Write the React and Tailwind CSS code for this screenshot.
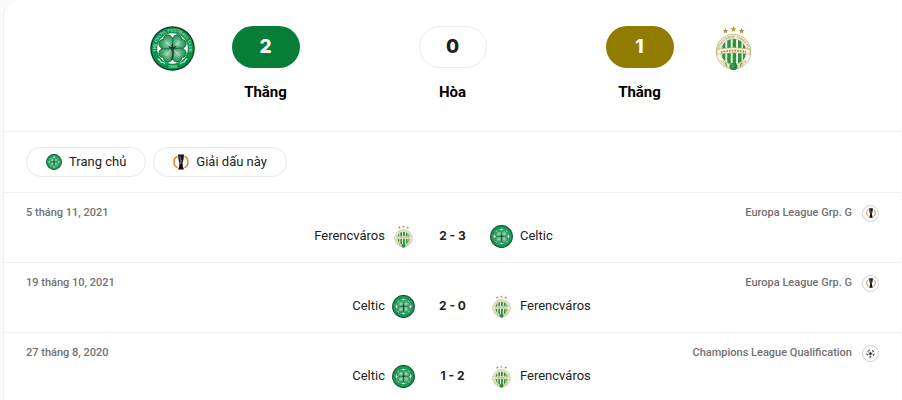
import { useId } from 'react'

const MATCHES = [
  { id: 1, date: '5 tháng 11, 2021', league: 'Europa League Grp. G', cup: 'europa', home: 'Ferencváros', away: 'Celtic', score: '2 - 3' },
  { id: 2, date: '19 tháng 10, 2021', league: 'Europa League Grp. G', cup: 'europa', home: 'Celtic', away: 'Ferencváros', score: '2 - 0' },
  { id: 3, date: '27 tháng 8, 2020', league: 'Champions League Qualification', cup: 'champions', home: 'Celtic', away: 'Ferencváros', score: '1 - 2' },
]

const LEAF = 'M50 50C47 44 33 40 33 29C33 18 45 15 50 22C55 15 67 18 67 29C67 40 53 44 50 50Z'

function CelticCrest({ className, lettering = false }) {
  const id = useId()
  return (
    <svg viewBox="0 0 100 100" className={className} aria-hidden="true">
      <defs>
        <radialGradient id={`${id}leaf`} cx="50%" cy="50%" r="60%">
          <stop offset="0" stopColor="#9fd8b4" />
          <stop offset="0.500" stopColor="#4fae77" />
          <stop offset="1" stopColor="#1d8a4e" />
        </radialGradient>
        <path id={`${id}top`} d="M14.500 60A37 37 0 1 1 85.500 60" />
      </defs>
      <circle cx="50" cy="50" r="49.500" fill="#0b3d24" />
      <circle cx="50" cy="50" r="46.500" fill="#0a9249" />
      <circle cx="50" cy="50" r="34" fill="#fff" />
      {lettering ? (
        <>
          <text fill="#a4dcba" fontSize="9" fontWeight="700" fontFamily="Liberation Sans, sans-serif">
            <textPath href={`#${id}top`} startOffset="50%" textAnchor="middle">THE CELTIC FOOTBALL CLUB</textPath>
          </text>
          <text x="50" y="93" textAnchor="middle" fill="#8fd0a9" fontSize="9" fontWeight="700" fontFamily="Liberation Sans, sans-serif">1888</text>
          <path d="M17 73q4 0 5 4t6 4q3 0 6 4M83 73q-4 0 -5 4t-6 4q-3 0 -6 4" fill="none" stroke="#c9ead6" strokeWidth="2.500" />
        </>
      ) : (
        <circle cx="50" cy="50" r="39.500" fill="none" stroke="#7fcb9f" strokeWidth="4" strokeDasharray="3 3" opacity="0.500" />
      )}
      {[45, 135, 225, 315].map((turn) => (
        <path key={turn} d={LEAF} transform={`rotate(${turn} 50 50)`} fill={`url(#${id}leaf)`} stroke="#0a6e39" strokeWidth="2" />
      ))}
      <path d="M34 34L66 66M66 34L34 66" stroke="#c4e4d0" strokeWidth="1.500" />
      <path d="M50 50q3 12 -2 26M42 46l8 4l8 -5M50 41v9" fill="none" stroke="#26332b" strokeWidth="3" />
      <circle cx="50" cy="50" r="4" fill="#26332b" />
    </svg>
  )
}

function FerencvarosCrest({ className, lettering = false }) {
  const id = useId()
  const star = 'M0 -6.500L1.800 -2L6.500 -2L2.800 1L4.200 5.600L0 2.900L-4.200 5.600L-2.800 1L-6.500 -2L-1.800 -2Z'
  return (
    <svg viewBox="0 0 100 100" className={className} aria-hidden="true">
      <defs>
        <clipPath id={`${id}disc`}>
          <circle cx="50" cy="57" r="28" />
        </clipPath>
        <path id={`${id}arc`} d="M18.500 64A32 32 0 1 1 81.500 64" />
      </defs>
      <g fill="#b5953c">
        <path d={star} transform="translate(32 11)" />
        <path d={star} transform="translate(50 7)" />
        <path d={star} transform="translate(68 11)" />
      </g>
      <circle cx="50" cy="57" r="38.500" fill="#fbf9ef" stroke="#c2b57b" strokeWidth="2" />
      {lettering ? (
        <text fill="#a3924c" fontSize="7" fontWeight="700" fontFamily="Liberation Sans, sans-serif">
          <textPath href={`#${id}arc`} startOffset="50%" textAnchor="middle">FERENCVÁROSI TORNA CLUB</textPath>
        </text>
      ) : (
        <circle cx="50" cy="57" r="33" fill="none" stroke="#b5a45e" strokeWidth="6" strokeDasharray="3 2" opacity="0.600" />
      )}
      <circle cx="50" cy="57" r="28.500" fill="#fff" stroke="#c2b57b" strokeWidth="1.500" />
      <g clipPath={`url(#${id}disc)`} fill="#2f9338">
        <path d="M25 30h7v56h-7zM36 26h8v62h-8zM48 26h8v62h-8zM60 26h8v62h-8zM71 30h6v56h-6z" />
      </g>
      <path d="M13 52Q50 45 87 52V63Q50 56 13 63Z" fill="#fbf9ee" stroke="#b9aa66" strokeWidth="1.500" />
      <path d="M22 57.500Q50 52 78 57.500" fill="none" stroke="#a08c3c" strokeWidth="4" strokeDasharray="4 2" />
      <path d="M22 77L40 84L42 94Q30 91 22 77ZM78 77L60 84L58 94Q70 91 78 77Z" fill="#fbf9ee" stroke="#b9aa66" strokeWidth="1.500" />
      <path d="M31 82l5 7M69 82l-5 7" stroke="#a08c3c" strokeWidth="3" />
      <circle cx="50" cy="90" r="8.500" fill="#23893a" />
      <path d="M47 86h5M47 90h4M47 86v8" fill="none" stroke="#6fb67c" strokeWidth="1.500" />
    </svg>
  )
}

function EuropaLogo({ className }) {
  return (
    <svg viewBox="0 0 32 32" className={className} aria-hidden="true">
      <path d="M9 4.500A13 13 0 0 0 9 27.500M23 4.500A13 13 0 0 1 23 27.500" fill="none" stroke="#f07f31" strokeWidth="3" />
      <path d="M10 1H22L21 11L19 18L20 26L22 31H10L12 26L13 18L11 11Z" fill="#111" />
      <path d="M14 4L16 14M17 12L15 20" stroke="#aaa" strokeWidth="1.500" />
    </svg>
  )
}

function ChampionsLogo({ className }) {
  return (
    <svg viewBox="0 0 32 32" className={className} aria-hidden="true">
      <circle cx="16" cy="16" r="13" fill="none" stroke="#333" strokeWidth="3" strokeDasharray="9 7.300" />
      <path d="M16 9L18 13.500L23 14L19 17.500L20.500 22.500L16 20L11.500 22.500L13 17.500L9 14L14 13.500Z" fill="#222" />
      <path d="M5 9l5 2M26 8l-4 3M4 20l5 0M28 20l-5 0M16 29v-5" stroke="#444" strokeWidth="3" />
    </svg>
  )
}

function Crest({ team }) {
  return team === 'Celtic' ? (
    <CelticCrest className="size-[23px] shrink-0" />
  ) : (
    <FerencvarosCrest className="size-[23px] shrink-0" />
  )
}

function Tally({ count, label, tone }) {
  return (
    <div className="flex w-[68px] flex-col items-center gap-3">
      <span className={`flex h-[42px] w-full items-center justify-center rounded-full font-['Inter',sans-serif] text-[19px] font-extrabold ${tone}`}>{count}</span>
      <span className="text-[15px] leading-6 font-bold text-black">{label}</span>
    </div>
  )
}

function MatchRow({ match }) {
  return (
    <li className="h-[70px] border-t border-[#f2f2f2] px-[22px] pt-[10px]">
      <div className="flex h-5 items-center justify-between text-[11px] leading-5 font-medium text-[#717171]">
        <time>{match.date}</time>
        <span className="flex items-center gap-[10px]">
          {match.league}
          <span className="flex size-[17px] items-center justify-center rounded-full border border-[#d0d0d0]">
            {match.cup === 'europa' ? <EuropaLogo className="size-[10px]" /> : <ChampionsLogo className="size-[9px]" />}
          </span>
        </span>
      </div>
      <a href="#match" className="grid grid-cols-[1fr_75px_1fr] items-center text-[13px] leading-[26px] text-[#222]">
        <span className="flex items-center justify-end gap-[7px]">
          {match.home}
          <Crest team={match.home} />
        </span>
        <span className="text-center font-['Inter',sans-serif] text-xs leading-[26px] font-bold">{match.score}</span>
        <span className="flex items-center gap-[7px]">
          <Crest team={match.away} />
          {match.away}
        </span>
      </a>
    </li>
  )
}

export default function App() {
  return (
    <div className="min-h-screen overflow-hidden bg-[#fafafa] pr-px pl-[3px] font-['Roboto',sans-serif]">
      <section className="min-h-screen rounded-tl-2xl border-l border-[#f0f0f0] bg-white">
        <div className="flex h-[131px] justify-center gap-[119px] pt-[26px]">
          <div className="flex gap-[37px]">
            <CelticCrest className="size-[45px]" lettering />
            <Tally count={2} label="Thắng" tone="bg-[#077d37] text-white" />
          </div>
          <Tally count={0} label="Hòa" tone="border border-[#ececec] text-[#222]" />
          <div className="flex gap-[37px]">
            <Tally count={1} label="Thắng" tone="bg-[#917c02] text-white" />
            <FerencvarosCrest className="size-[45px]" lettering />
          </div>
        </div>

        <div className="flex h-[61px] gap-[7px] border-t border-[#f2f2f2] px-[22px] pt-[15px]">
          <button type="button" className="flex h-[30px] items-center gap-[7px] rounded-full border border-[#e8e8e8] px-[19px] text-[13px] text-[#222]">
            <CelticCrest className="size-4" />
            Trang chủ
          </button>
          <button type="button" className="flex h-[30px] items-center gap-[7px] rounded-full border border-[#e8e8e8] px-[19px] text-[13px] text-[#222]">
            <EuropaLogo className="size-4" />
            Giải dấu này
          </button>
        </div>

        <ul>
          {MATCHES.map((match) => (
            <MatchRow key={match.id} match={match} />
          ))}
        </ul>
      </section>
    </div>
  )
}
